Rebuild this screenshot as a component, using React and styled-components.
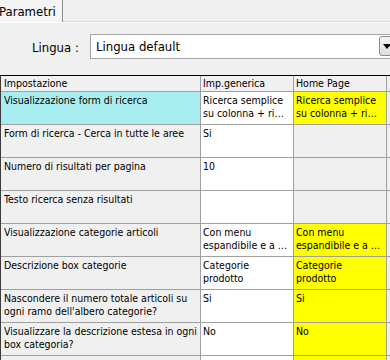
import styled, { createGlobalStyle } from "styled-components"

const GlobalStyle = createGlobalStyle`
  html, body {
    margin: 0;
    padding: 0;
    background: #f0f0f0;
    overflow: hidden;
  }
  body {
    font-family: "DejaVu Sans Condensed", "Liberation Sans", sans-serif;
    color: #000;
  }
`

const Page = styled.div`
  width: 390px;
  height: 360px;
  overflow: hidden;
  background: #f0f0f0;
`

const TabStrip = styled.div`
  display: flex;
  height: 22px;
  border-bottom: 1px solid #fbfbfb;
  box-shadow: 0 -1px 0 #dcdcdc inset;
`

const Tab = styled.div`
  width: 64px;
  margin-left: -1px;
  height: 22px;
  box-sizing: border-box;
  border-right: 1px solid #8c8c8c;
  background: #f4f4f4;
  font-size: 13px;
  line-height: 22px;
  padding-top: 1px;
  white-space: nowrap;
`

const LanguageRow = styled.div`
  display: flex;
  align-items: center;
  margin-top: 11px;
  height: 25px;
`

const Label = styled.div`
  width: 90px;
  box-sizing: border-box;
  padding: 2px 0 0 32px;
  font-size: 13px;
`

const Combo = styled.div`
  flex: 1;
  height: 25px;
  box-sizing: border-box;
  border: 1px solid #a6a6a6;
  border-right: none;
  background: #fff;
  display: flex;
  align-items: center;
  padding-left: 5px;
  font-size: 13px;
  position: relative;
`

const DropButton = styled.div`
  position: absolute;
  left: 288px;
  top: 1px;
  width: 16px;
  height: 20px;
  box-sizing: border-box;
  border: 1px solid #8a8a8a;
  border-radius: 3px;
  background: linear-gradient(#f6f6f6, #dcdcdc);
  display: flex;
  align-items: center;
  padding-left: 3px;
`

const Grid = styled.div`
  margin-top: 16px;
  display: grid;
  grid-template-columns: 200px 93px 93px 1fr;
  grid-auto-rows: 33px;
  grid-template-rows: 16px;
  border-top: 1px solid #000;
  border-left: 1px solid #3c3c3c;
  font-size: 10.5px;
  line-height: 13px;
`

const HeadCell = styled.div`
  box-sizing: border-box;
  background: #f0f0f0;
  border-right: 1px solid #a0a0a0;
  border-bottom: 1px solid #a0a0a0;
  padding: 1px 3px 0 ${(p) => (p.first ? 3 : 2)}px;
  white-space: nowrap;
  overflow: hidden;
`

const Cell = styled.div`
  box-sizing: border-box;
  background: ${(p) => p.bg};
  border-right: 1px solid #a0a0a0;
  border-bottom: 1px solid #a0a0a0;
  padding: 2px 2px 0 ${(p) => (p.first ? 3 : 2)}px;
  overflow: hidden;
`

const Line = styled.div`
  white-space: nowrap;
  overflow: hidden;
`

const CYAN = "#a8eef0"
const YELLOW = "#ffff00"
const GRAY = "#f0f0f0"
const WHITE = "#ffffff"

const rows = [
  {
    label: ["Visualizzazione form di ricerca"],
    generic: ["Ricerca semplice", "su colonna + ri…"],
    home: ["Ricerca semplice", "su colonna + ri…"],
    selected: true,
  },
  { label: ["Form di ricerca - Cerca in tutte le aree"], generic: ["Si"] },
  { label: ["Numero di risultati per pagina"], generic: ["10"] },
  { label: ["Testo ricerca senza risultati"], generic: [] },
  {
    label: ["Visualizzazione categorie articoli"],
    generic: ["Con menu", "espandibile e a …"],
    home: ["Con menu", "espandibile e a …"],
  },
  {
    label: ["Descrizione box categorie"],
    generic: ["Categorie", "prodotto"],
    home: ["Categorie", "prodotto"],
  },
  {
    label: ["Nascondere il numero totale articoli su", "ogni ramo dell'albero categorie?"],
    generic: ["Si"],
    home: ["Si"],
  },
  {
    label: ["Visualizzare la descrizione estesa in ogni", "box categoria?"],
    generic: ["No"],
    home: ["No"],
  },
  { label: ["Immagine categoria"], generic: [], home: [] },
]

function Lines({ items }) {
  return (items || []).map((t, i) => <Line key={i}>{t}</Line>)
}

function Row({ row }) {
  const hasHome = row.home != null
  return (
    <>
      <Cell first bg={row.selected ? CYAN : GRAY}>
        <Lines items={row.label} />
      </Cell>
      <Cell bg={WHITE}>
        <Lines items={row.generic} />
      </Cell>
      <Cell bg={hasHome ? YELLOW : GRAY}>
        <Lines items={row.home} />
      </Cell>
      <Cell bg={GRAY} />
    </>
  )
}

export default function App() {
  return (
    <Page>
      <GlobalStyle />
      <TabStrip>
        <Tab>Parametri</Tab>
      </TabStrip>
      <LanguageRow>
        <Label>Lingua :</Label>
        <Combo>
          Lingua default
          <DropButton>
            <svg width="8" height="5" viewBox="0 0 8 5">
              <path d="M0 0h8L4 5z" fill="#000" />
            </svg>
          </DropButton>
        </Combo>
      </LanguageRow>
      <Grid>
        <HeadCell first>Impostazione</HeadCell>
        <HeadCell>Imp.generica</HeadCell>
        <HeadCell>Home Page</HeadCell>
        <HeadCell />
        {rows.map((r, i) => (
          <Row key={i} row={r} />
        ))}
      </Grid>
    </Page>
  )
}
